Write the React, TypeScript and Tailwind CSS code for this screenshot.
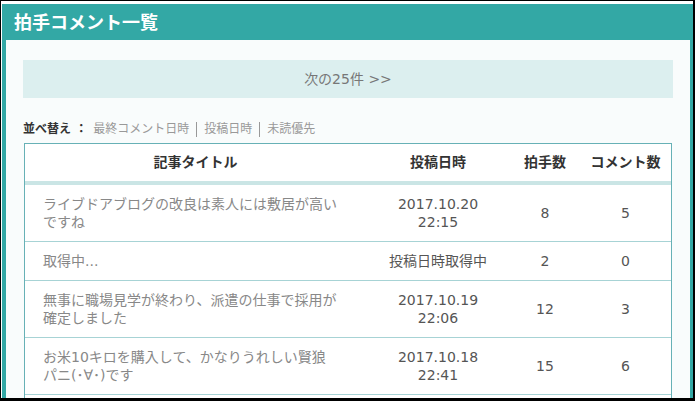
const font = { fontFamily: '"DejaVu Sans", "Noto Sans CJK JP", sans-serif' };

interface Row {
  title: string[];
  date: string[];
  claps: number;
  comments: number;
}

const rows: Row[] = [
  { title: ["ライブドアブログの改良は素人には敷居が高い", "ですね"], date: ["2017.10.20", "22:15"], claps: 8, comments: 5 },
  { title: ["取得中..."], date: ["投稿日時取得中"], claps: 2, comments: 0 },
  { title: ["無事に職場見学が終わり、派遣の仕事で採用が", "確定しました"], date: ["2017.10.19", "22:06"], claps: 12, comments: 3 },
  { title: ["お米10キロを購入して、かなりうれしい賢狼", "パニ(･∀･)です"], date: ["2017.10.18", "22:41"], claps: 15, comments: 6 },
];

export default function App() {
  return (
    <div className="w-[695px] h-[401px] overflow-hidden bg-black pt-[1px] pl-[1px] pr-[2px] pb-[3px]" style={font}>
      <div className="h-full bg-white pt-[3px] pl-[1px] flex flex-col">
        <div className="flex-1 flex flex-col bg-[#33a8a5] min-h-0">
          {/* Header */}
          <div className="h-[36px] shrink-0 flex items-center pl-[12px] text-[18px] font-bold text-white">
            拍手コメント一覧
          </div>

          {/* Body */}
          <div className="flex-1 min-h-0 ml-[4px] mr-[3px] bg-[#f9fcfc] px-[17px] pt-[20px] overflow-hidden">
            <div className="h-[38px] bg-[#dcefef] flex items-center justify-center text-[14px] text-[#777]">
              次の25件 &gt;&gt;
            </div>

            {/* Sort */}
            <div className="mt-[22px] h-[18px] flex items-center text-[12px]">
              <span className="font-bold text-[#333]">並べ替え ：</span>
              <span className="ml-[6px] text-[#999]">最終コメント日時</span>
              <span className="mx-[7px] h-[15px] border-l border-[#999]" />
              <span className="text-[#999]">投稿日時</span>
              <span className="mx-[7px] h-[15px] border-l border-[#999]" />
              <span className="text-[#999]">未読優先</span>
            </div>

            {/* Table */}
            <div className="mt-[5px] mx-[1px] min-h-[300px] border border-[#67b1b6] bg-white">
              <div className="flex h-[41px] items-center text-[14px] font-bold text-[#333] border-b-[4px] border-[#cae5e5]">
                <div className="w-[341px] text-center">記事タイトル</div>
                <div className="w-[144px] text-center">投稿日時</div>
                <div className="w-[70px] text-center">拍手数</div>
                <div className="flex-1 text-center">コメント数</div>
              </div>
              {rows.map((r, i) => (
                <div key={i} className="flex items-center border-b border-[#a7d3d5] py-[10px] text-[14px] leading-[18px]">
                  <div className="w-[341px] pl-[18px] text-[#888]">
                    {r.title.map((t, j) => (
                      <div key={j} className="whitespace-nowrap">{t}</div>
                    ))}
                  </div>
                  <div className="w-[144px] text-center text-[#555]">
                    {r.date.map((d, j) => (
                      <div key={j}>{d}</div>
                    ))}
                  </div>
                  <div className="w-[70px] text-center text-[#555]">{r.claps}</div>
                  <div className="flex-1 text-center text-[#555]">{r.comments}</div>
                </div>
              ))}
            </div>
          </div>
        </div>
      </div>
    </div>
  );
}
